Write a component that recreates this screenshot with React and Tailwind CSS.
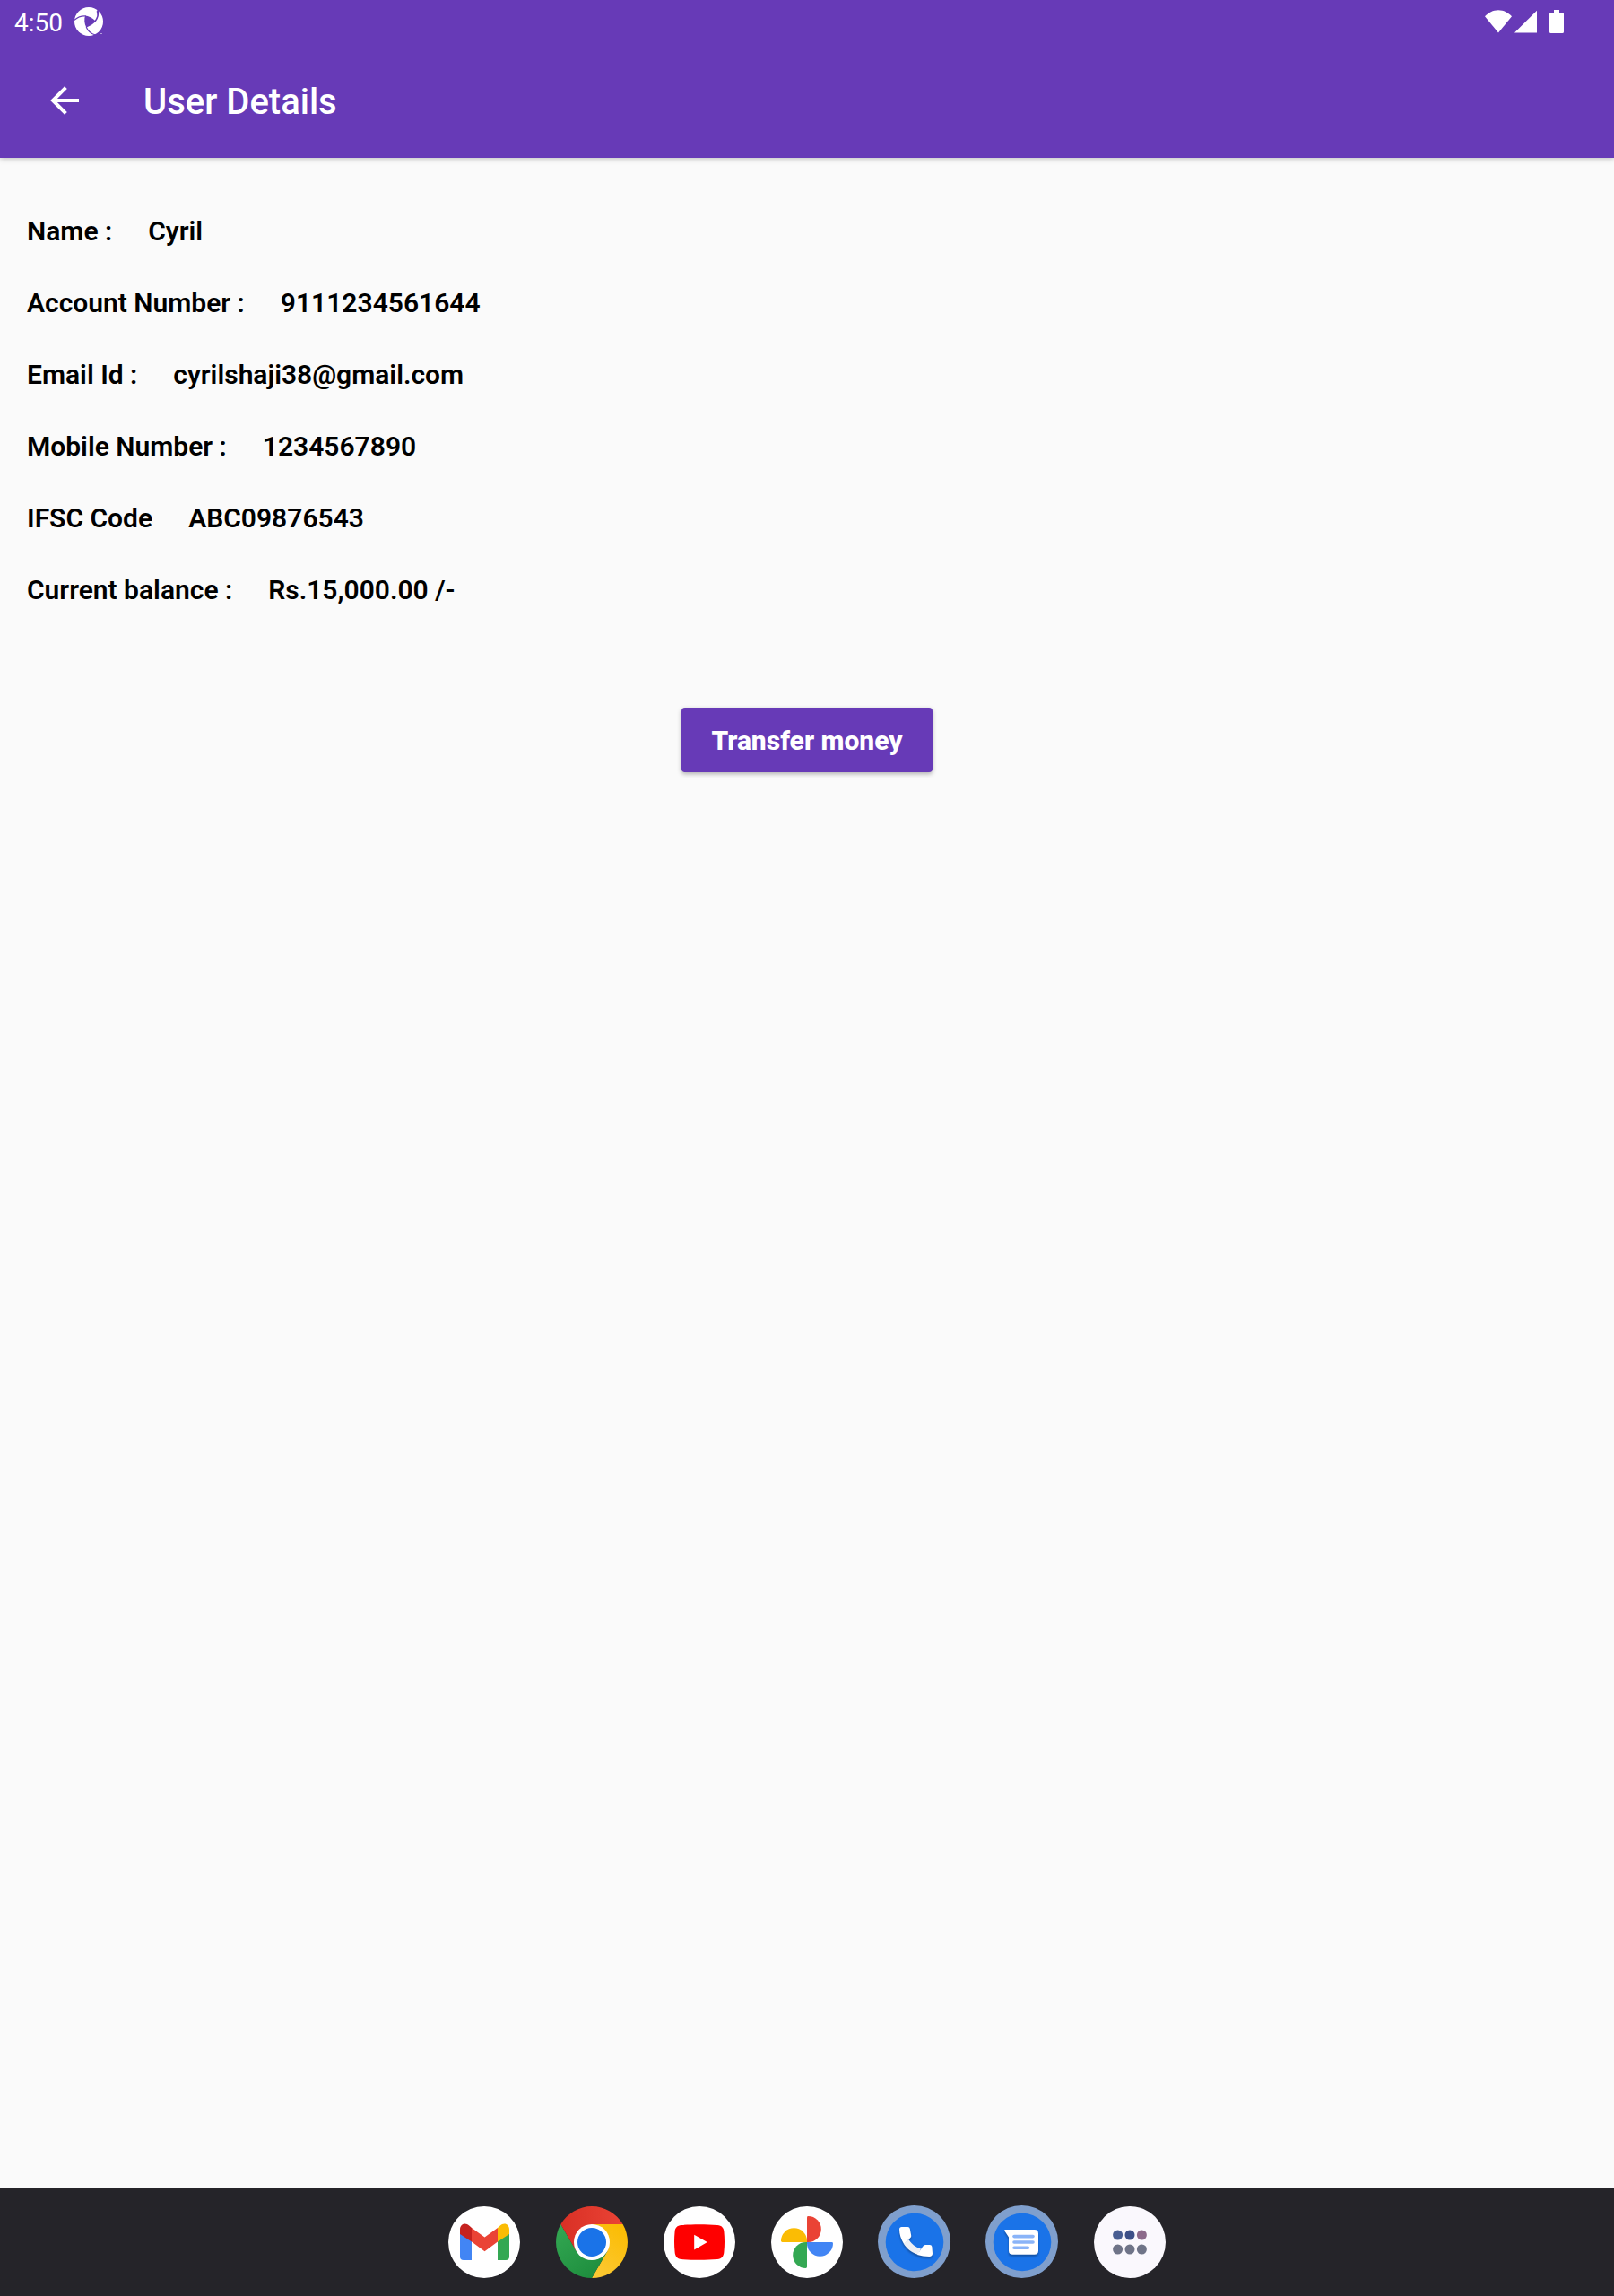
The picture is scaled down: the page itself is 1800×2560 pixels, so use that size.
const details = [
  ["Name :", "Cyril"],
  ["Account Number :", "9111234561644"],
  ["Email Id :", "cyrilshaji38@gmail.com"],
  ["Mobile Number :", "1234567890"],
  ["IFSC Code", "ABC09876543"],
  ["Current balance :", "Rs.15,000.00 /-"],
];

function ApertureIcon() {
  return (
    <svg className="h-8 w-8" viewBox="0 0 32 32" aria-hidden="true">
      <circle cx="16" cy="16" r="16" fill="#fff" />
      <path d="M12 9.6C15.5 9.8 20 12 23.6 15.6C21.5 18.8 17 21.5 13.2 22.4C11 18.5 10.8 13.5 12 9.6Z" fill="#673ab7" />
      <g fill="none" stroke="#673ab7">
        <path d="M0 14.4C3.5 11.2 8 9.5 13 10" strokeWidth="1.2" />
        <path d="M26.2 2.8C27 7.5 26 12 23 15.8" strokeWidth="1.6" />
        <path d="M13.2 22C15 26.5 18.5 29.7 23.4 31" strokeWidth="1.2" />
      </g>
      <path d="M24.6 4.4L26.8 3.6L26 10Z" fill="#673ab7" />
      <path d="M28 29.6H31" stroke="#fff" strokeWidth="0.8" opacity="0.7" />
    </svg>
  );
}

function WifiIcon() {
  return (
    <svg className="h-8 w-[30px]" viewBox="0 0 30 32" fill="#fff" aria-hidden="true">
      <path d="M0 10.2C4 6 9 3.2 15 3.2S26 6 30 10.2L15 28.4Z" />
    </svg>
  );
}

function SignalIcon() {
  return (
    <svg className="ml-[3px] h-8 w-[25px]" viewBox="0 0 25 32" fill="#fff" aria-hidden="true">
      <path d="M25 3.8V28.6H0Z" />
    </svg>
  );
}

function BatteryIcon() {
  return (
    <svg className="ml-3.5 h-8 w-4" viewBox="0 0 16 32" fill="#fff" aria-hidden="true">
      <path d="M5 3H11V6H14.4Q16 6 16 7.6V27.4Q16 29 14.4 29H1.6Q0 29 0 27.4V7.6Q0 6 1.6 6H5Z" />
    </svg>
  );
}

function GmailIcon() {
  return (
    <svg className="h-full w-full" viewBox="0 0 80 80" aria-hidden="true">
      <circle cx="40" cy="40" r="40" fill="#fff" />
      <path d="M13 30L26 38.5V60H17Q13 60 13 56Z" fill="#4285f4" />
      <path d="M68 30L55 38.5V60H64Q68 60 68 56Z" fill="#34a853" />
      <path d="M26 24L40.5 34.5L55 24V39.5L40.5 50.2L26 39.5Z" fill="#ea4335" />
      <path d="M13 31V26C13 19.6 19 17.2 23.5 21.8L26 24V39.5Z" fill="#c5221f" />
      <path d="M68 31V26C68 19.6 62 17.2 57.5 21.8L55 24V39.5Z" fill="#fbbc04" />
    </svg>
  );
}

function ChromeIcon() {
  return (
    <svg className="h-full w-full" viewBox="0 0 80 80" aria-hidden="true">
      <defs>
        <linearGradient id="chromeRed" x1="0" x2="1">
          <stop offset="0" stopColor="#d93025" />
          <stop offset="1" stopColor="#ea4335" />
        </linearGradient>
        <linearGradient id="chromeGreen" x1="0.7" y1="1" x2="0" y2="0">
          <stop offset="0" stopColor="#1e8e3e" />
          <stop offset="1" stopColor="#34a853" />
        </linearGradient>
        <linearGradient id="chromeYellow" x1="0.2" y1="1" x2="0.7" y2="0">
          <stop offset="0" stopColor="#fcc934" />
          <stop offset="1" stopColor="#fbbc04" />
        </linearGradient>
      </defs>
      <path d="M40 20H74.6A40 40 0 0 1 40 80L57.3 50Z" fill="url(#chromeYellow)" />
      <path d="M22.7 50L5.4 20A40 40 0 0 0 40 80L57.3 50L40 40Z" fill="url(#chromeGreen)" />
      <path d="M40 20H74.6A40 40 0 0 0 5.4 20L22.7 50L40 40Z" fill="url(#chromeRed)" />
      <circle cx="40" cy="40" r="20" fill="#fff" />
      <circle cx="40" cy="40" r="16" fill="#1a73e8" />
    </svg>
  );
}

function YouTubeIcon() {
  return (
    <svg className="h-full w-full" viewBox="0 0 80 80" aria-hidden="true">
      <circle cx="40" cy="40" r="40" fill="#fff" />
      <path d="M20 21C32 20 48 20 60 21C65 21.4 67 24 67.4 28C68.2 36 68.2 43 67.4 51C67 55.6 65 58.4 60 59C48 60 32 60 20 59C15 58.4 13 55.6 12.6 51C11.8 43 11.8 36 12.6 28C13 24 15 21.4 20 21Z" fill="#f00" />
      <path d="M34.2 31.8V48.4L48.8 40.1Z" fill="#fff" />
    </svg>
  );
}

function PhotosIcon() {
  return (
    <svg className="h-full w-full" viewBox="0 0 80 80" aria-hidden="true">
      <circle cx="40" cy="40" r="40" fill="#fff" />
      <path d="M40 40V12.4Q40 11 41.4 11A14.4 14.5 0 0 1 41.4 40Z" fill="#ea4335" />
      <path d="M40 40H67.6Q69 40 69 41.4A14.5 14.4 0 0 1 40 41.4Z" fill="#4285f4" />
      <path d="M40 40V67.6Q40 69 38.6 69A14.4 14.5 0 0 1 38.6 40Z" fill="#34a853" />
      <path d="M40 40H12.4Q11 40 11 38.6A14.5 14.4 0 0 1 40 38.6Z" fill="#fbbc04" />
    </svg>
  );
}

function PhoneIcon() {
  return (
    <svg className="h-full w-full overflow-visible" viewBox="0 0 80 80" aria-hidden="true">
      <circle cx="39.5" cy="39.5" r="40.5" fill="#7f9fcd" />
      <circle cx="40" cy="40" r="32.3" fill="#1a73e8" />
      <g className="drop-shadow-[0_2px_1px_rgba(0,0,0,0.3)]">
        <path d="M28 42C32 48 38 52.5 44 54L47 47.5C41 45.5 36.5 42 33.4 37Z" fill="#eef0f5" />
        <path d="M25.6 23H32.4Q34.4 23 34.8 25L36.2 32.4Q36.5 34 35.4 35L28.2 42.2C24.8 37 23 31 23 25.6Q23 23 25.6 23Z" fill="#fff" />
        <path d="M43 54L49 45Q50.2 43 52 43H57Q59 43 59.4 45L60 52.6Q60 56 56.4 56C51.6 56 47 55.2 43 54Z" fill="#fff" />
      </g>
    </svg>
  );
}

function MessagesIcon() {
  return (
    <svg className="h-full w-full overflow-visible" viewBox="0 0 80 80" aria-hidden="true">
      <circle cx="39.5" cy="39.5" r="40.5" fill="#7f9fcd" />
      <circle cx="40" cy="40" r="32.3" fill="#1a73e8" />
      <path className="drop-shadow-[0_2px_1px_rgba(0,0,0,0.3)]" d="M21 26H53.6Q58 26 58 30.4V49.4Q58 53.8 53.6 53.8H29.4Q25 53.8 25 49.4V34.4L20.4 27.6Q19.8 26 21 26Z" fill="#fff" />
      <g stroke="#8ab4f8" strokeWidth="3.6" strokeLinecap="round">
        <path d="M31 33.6H52" />
        <path d="M31 40H52" />
        <path d="M31 46.2H46.4" />
      </g>
    </svg>
  );
}

function AppsIcon() {
  return (
    <svg className="h-full w-full" viewBox="0 0 80 80" aria-hidden="true">
      <circle cx="40" cy="40" r="40" fill="#faf8fd" />
      <circle cx="26.6" cy="32" r="5.5" fill="#485d92" />
      <circle cx="40" cy="32" r="5.5" fill="#3d5088" />
      <circle cx="53.4" cy="32" r="5.5" fill="#8c6a8b" />
      <circle cx="26.6" cy="48" r="5.5" fill="#6f7488" />
      <circle cx="40" cy="48" r="5.5" fill="#6f7488" />
      <circle cx="53.4" cy="48" r="5.5" fill="#6f7488" />
    </svg>
  );
}

const dock = [
  ["Gmail", GmailIcon],
  ["Chrome", ChromeIcon],
  ["YouTube", YouTubeIcon],
  ["Photos", PhotosIcon],
  ["Phone", PhoneIcon],
  ["Messages", MessagesIcon],
  ["All apps", AppsIcon],
];

export default function App() {
  return (
    <div className="flex min-h-screen flex-col bg-[#fafafa] font-[Roboto,sans-serif] text-black">
      <header className="bg-[#673ab7] text-white shadow-[0_1px_6px_rgba(0,0,0,0.25)]">
        <div className="flex h-12 items-center pr-14 pl-4">
          <time className="mr-[13px] pt-1 text-[28px] leading-8">4:50</time>
          <ApertureIcon />
          <div className="ml-auto flex items-center">
            <WifiIcon />
            <SignalIcon />
            <BatteryIcon />
          </div>
        </div>
        <div className="flex h-32 items-center pt-1">
          <button type="button" aria-label="Back" className="ml-12 flex h-12 w-12 items-center justify-center pb-1">
            <svg className="h-8 w-8" viewBox="0 0 32 32" fill="none" stroke="#fff" strokeWidth="4" aria-hidden="true">
              <path d="M32 16H4M17.4 1.6L3 16L17.4 30.4" />
            </svg>
          </button>
          <h1 className="ml-16 text-[40px] leading-12 font-medium">User Details</h1>
        </div>
      </header>

      <main className="flex flex-1 flex-col px-[30px] pt-[62px]">
        <dl className="flex flex-col gap-10 text-[30px] leading-10 font-semibold">
          {details.map(([label, value]) => (
            <div key={label} className="flex gap-10">
              <dt>{label}</dt>
              <dd>{value}</dd>
            </div>
          ))}
        </dl>
        <button
          type="button"
          className="mt-[111px] self-center rounded bg-[#673ab7] px-[33px] pt-[17px] pb-[15px] text-[30px] leading-10 font-extrabold text-white shadow-[0_2px_5px_rgba(0,0,0,0.3)]"
        >
          Transfer money
        </button>
      </main>

      <nav aria-label="Dock" className="flex h-[120px] items-center justify-center gap-10 bg-[#252429]">
        {dock.map(([name, Icon]) => (
          <button key={name} type="button" aria-label={name} className="h-20 w-20 rounded-full">
            <Icon />
          </button>
        ))}
      </nav>
    </div>
  );
}
